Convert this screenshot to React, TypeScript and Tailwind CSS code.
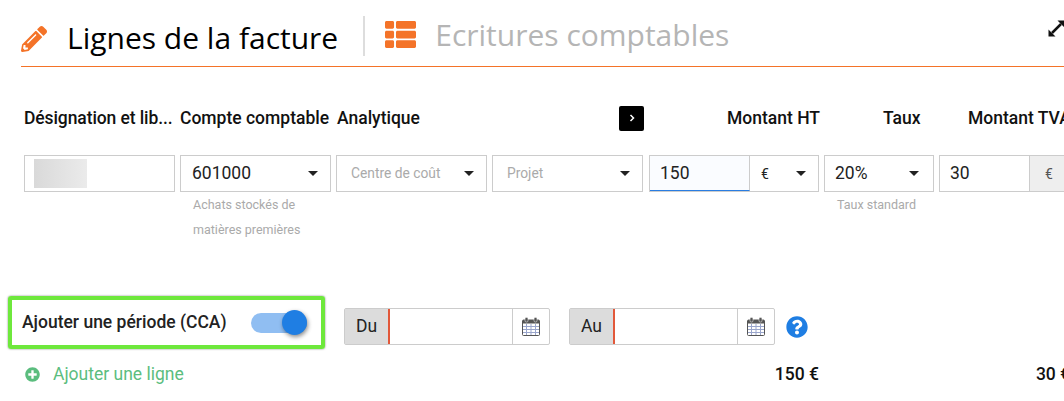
import { FaPencilAlt, FaThList, FaQuestionCircle, FaPlusCircle } from "react-icons/fa";

function Caret() {
  return <span className="w-0 h-0 border-x-[5px] border-x-transparent border-t-[5px] border-t-[#222]" />;
}

function Select({ label, muted }: { label: string; muted?: boolean }) {
  return (
    <div className="w-[151px] shrink-0 h-[37px] border border-[#ccc] flex items-center justify-between pl-[11px] pr-[12px]">
      {muted ? (
        <span className="text-[13.8px] text-[#aaa] pl-[3px]">{label}</span>
      ) : (
        <span className="text-[17.5px] text-[#222]">{label}</span>
      )}
      <Caret />
    </div>
  );
}

function Calendar() {
  return (
    <svg width="18" height="19" viewBox="0 0 18 19">
      <rect x="0.5" y="3" width="17" height="15.5" rx="1" fill="#fff" stroke="#555" strokeWidth="1" />
      <rect x="1" y="3" width="16" height="3.5" fill="#555" />
      <rect x="3" y="0.5" width="3" height="4.5" rx="1.2" fill="#555" stroke="#fff" strokeWidth="0.5" />
      <rect x="12" y="0.5" width="3" height="4.5" rx="1.2" fill="#555" stroke="#fff" strokeWidth="0.5" />
      <path d="M1 9.5h16M1 12.5h16M1 15.5h16M4.5 7v11M9 7v11M13.5 7v11" stroke="#9aa6cc" strokeWidth="1" />
    </svg>
  );
}

function DateField({ label }: { label: string }) {
  return (
    <div className="w-[206px] h-[37px] border border-[#ccc] rounded-[2px] flex items-stretch">
      <div className="w-[45px] bg-[#dcdcdc] border-r-2 border-r-[#e2583a] flex items-center justify-center text-[17.5px] text-[#222]">
        {label}
      </div>
      <div className="flex-1 border-r border-r-[#ccc]" />
      <div className="w-[36px] flex items-center justify-center">
        <Calendar />
      </div>
    </div>
  );
}

export default function App() {
  return (
    <div className="w-[1064px] h-[401px] overflow-hidden bg-white font-['Roboto',sans-serif] text-[#111]">
      <div className="relative ml-[21px] h-[67px] border-b border-b-[#f47328] flex items-center">
        <FaPencilAlt className="text-[#f47328] text-[26px] mt-[11px]" />
        <h1 className="ml-[20px] mt-[10px] text-[30px] font-['Open_Sans',sans-serif] leading-none text-black">
          Lignes de la facture
        </h1>
        <div className="ml-[25px] w-[2px] h-[40px] bg-[#ddd] mt-[6px]" />
        <FaThList className="ml-[20px] text-[#f47328] text-[31px] mt-[2px]" />
        <span className="ml-[19px] text-[30px] font-['Open_Sans',sans-serif] leading-none text-[#b5b5b5] mt-[4px]">
          Ecritures comptables
        </span>
        <svg className="absolute left-[1027px] top-[20px]" width="17" height="17" viewBox="0 0 17 17">
          <path d="M4 13L13 4" stroke="#111" strokeWidth="2.5" />
          <path d="M9.5 0.5H16.5V7.5zM0.5 9.5V16.5H7.5z" fill="#111" />
        </svg>
      </div>

      <div className="ml-[24px] mt-[38px] h-[26px] flex items-center text-[17.5px] font-medium whitespace-nowrap">
        <span className="w-[156px] shrink-0 tracking-[-0.1px]">Désignation et lib...</span>
        <span className="w-[157px] shrink-0">Compte comptable</span>
        <span className="w-[282px] shrink-0">Analytique</span>
        <span className="w-[25px] h-[25px] shrink-0 bg-black rounded-[2px] flex items-center justify-center">
          <svg width="8" height="10" viewBox="0 0 8 10">
            <path d="M2.5 2l3 3-3 3" fill="none" stroke="#fff" strokeWidth="1.5" />
          </svg>
        </span>
        <span className="ml-[83px] w-[92px] shrink-0 text-right">Montant HT</span>
        <span className="ml-[64px] w-[38px] shrink-0">Taux</span>
        <span className="ml-[47px]">Montant TVA</span>
      </div>

      <div className="ml-[24px] mt-[24px] flex gap-[5px] items-start">
        <div className="w-[151px] shrink-0 h-[37px] border border-[#ccc] flex items-center pl-[9px]">
          <div className="w-[53px] h-[29px] bg-gradient-to-r from-[#d9d9d9] to-[#ebebeb]" />
        </div>
        <div className="w-[151px] shrink-0">
          <Select label="601000" />
          <div className="pl-[13px] text-[12.5px] leading-[25px] text-[#aaa]">
            Achats stockés de
            <br />
            matières premières
          </div>
        </div>
        <Select label="Centre de coût" muted />
        <Select label="Projet" muted />
        <div className="ml-px w-[170px] shrink-0 h-[37px] border border-[#ccc] flex">
          <div className="w-[100px] bg-[#fafcff] border-b border-b-[#2a7de1] border-r border-r-[#ccc] flex items-center pl-[10px] text-[17.5px] text-[#222]">
            150
          </div>
          <div className="flex-1 flex items-center justify-between pl-[11px] pr-[12px] text-sm text-[#222]">
            €
            <Caret />
          </div>
        </div>
        <div className="w-[110px] shrink-0">
          <div className="h-[37px] border border-[#ccc] flex items-center justify-between pl-[10px] pr-[14px] text-[17.5px] text-[#222]">
            20%
            <Caret />
          </div>
          <div className="pl-[13px] text-[12.5px] leading-[25px] text-[#aaa]">Taux standard</div>
        </div>
        <div className="w-[150px] shrink-0 h-[37px] border border-[#ccc] flex">
          <div className="w-[90px] border-r border-r-[#ccc] flex items-center pl-[10px] text-[17.5px] text-[#222]">30</div>
          <div className="flex-1 bg-[#eee] flex items-center pl-[15px] text-sm text-[#555]">€</div>
        </div>
      </div>

      <div className="ml-[8px] mt-[54px] flex items-start">
        <div className="w-[317px] h-[53px] border-[4px] border-[#6ee83c] rounded-[3px] shadow-[0_0_2px_#777] flex items-center justify-between pl-[10px] pr-[14px]">
          <span className="text-[17.5px] font-medium text-[#222]">Ajouter une période (CCA)</span>
          <div className="relative w-[56px] h-[20px] rounded-full bg-[#90bef2]">
            <div className="absolute right-0 top-[-3px] w-[25px] h-[25px] rounded-full bg-[#1f7ee3] shadow-[1px_2px_4px_rgba(0,0,0,0.45)]" />
          </div>
        </div>
        <div className="ml-[19px] mt-[12px] flex items-center">
          <DateField label="Du" />
          <div className="w-[19px]" />
          <DateField label="Au" />
          <FaQuestionCircle className="ml-[11px] text-[22px] text-[#1f7ee3]" />
        </div>
      </div>

      <div className="ml-[25px] mt-[12px] flex items-center h-[26px] whitespace-nowrap">
        <FaPlusCircle className="shrink-0 text-[15px] text-[#5bbd7e]" />
        <span className="ml-[13px] text-[17.5px] text-[#5bbd7e]">Ajouter une ligne</span>
        <span className="ml-[591px] text-[17.5px] font-medium">150 €</span>
        <span className="ml-[217px] text-[17.5px] font-medium">30 €</span>
      </div>
    </div>
  );
}
